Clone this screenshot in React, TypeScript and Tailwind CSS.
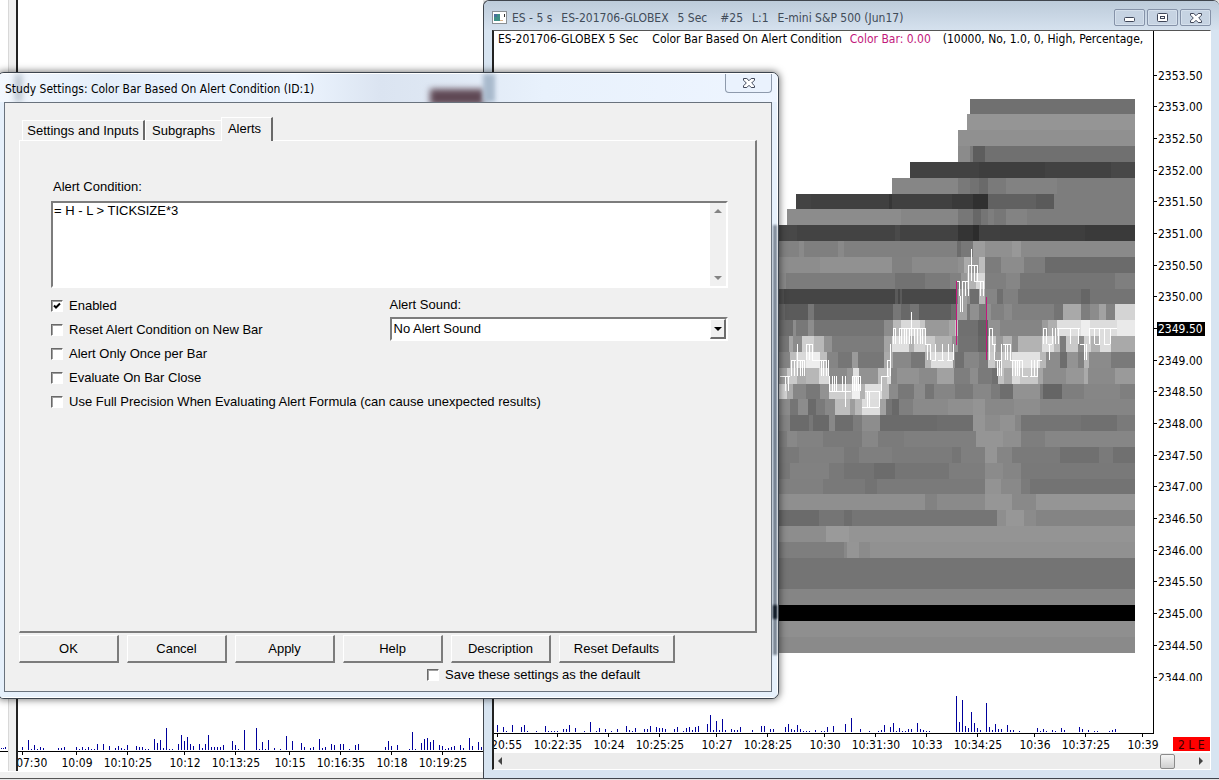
import React, { useState } from "react";

type Cell = [number, string];
type Bar = [number, number];

const ROW_HEIGHT = 554 / 35;
const PLOT_END = 1135;

// one entry per price row, each cell runs until the next one starts
const heatRows: Cell[][] = [
  [[970, "#707070"]],
  [[967, "#959595"]],
  [[958, "#909090"]],
  [[958, "#8b8b8b"], [970, "#7a7a7a"], [973, "#5d5d5d"], [985, "#707070"]],
  [[910, "#424242"], [979, "#3e3e3e"], [1045, "#424242"], [1111, "#484848"]],
  [[892, "#868686"], [958, "#797979"], [970, "#727272"], [979, "#6a6a6a"], [988, "#7a7a7a"], [1006, "#828282"], [1057, "#7d7d7d"]],
  [[796, "#434343"], [811, "#404040"], [889, "#363636"], [892, "#404040"], [952, "#3a3a3a"], [973, "#303030"], [988, "#616161"], [1036, "#5a5a5a"], [1054, "#7d7d7d"]],
  [[787, "#8c8c8c"], [901, "#868686"], [958, "#777777"], [973, "#676767"], [981, "#757575"], [988, "#7e7e7e"], [994, "#777777"], [1006, "#838383"], [1027, "#7d7d7d"]],
  [[779, "#484848"], [797, "#434343"], [895, "#4a4a4a"], [900, "#424242"], [958, "#343434"], [973, "#2c2c2c"], [979, "#404040"], [1000, "#3e3e3e"], [1085, "#3a3a3a"]],
  [[779, "#828282"], [799, "#8a8a8a"], [804, "#7f7f7f"], [838, "#898989"], [844, "#808080"], [957, "#6c6c6c"], [961, "#787878"], [973, "#9d9d9d"], [985, "#909090"], [1012, "#989898"], [1021, "#8a8a8a"]],
  [[779, "#8d8d8d"], [820, "#919191"], [892, "#818181"], [912, "#8a8a8a"], [958, "#909090"], [964, "#ababab"], [970, "#9b9b9b"], [979, "#bdbdbd"], [985, "#7c7c7c"], [1001, "#8c8c8c"], [1024, "#7d7d7d"], [1045, "#6b6b6b"]],
  [[779, "#8a8a8a"], [786, "#7c7c7c"], [895, "#727272"], [925, "#7a7a7a"], [950, "#818181"], [961, "#989898"], [967, "#b4b4b4"], [976, "#d8d8d8"], [985, "#7f7f7f"], [1006, "#868686"], [1020, "#757575"], [1115, "#7f7f7f"]],
  [[779, "#505050"], [784, "#454545"], [895, "#5a5a5a"], [898, "#484848"], [900, "#5a5a5a"], [902, "#484848"], [956, "#7a7a7a"], [958, "#a3a3a3"], [967, "#929292"], [970, "#6e6e6e"], [979, "#b8b8b8"], [985, "#858585"], [997, "#6f6f6f"], [1003, "#808080"], [1018, "#717171"], [1081, "#666666"], [1090, "#747474"]],
  [[779, "#666666"], [785, "#5b5b5b"], [808, "#777777"], [814, "#5e5e5e"], [893, "#777777"], [901, "#686868"], [910, "#747474"], [919, "#5f5f5f"], [951, "#6d6d6d"], [957, "#a2a2a2"], [967, "#787878"], [970, "#909090"], [979, "#7a7a7a"], [986, "#909090"], [991, "#818181"], [1004, "#8a8a8a"], [1012, "#808080"], [1054, "#747474"], [1063, "#a9a9a9"], [1081, "#7e7e7e"], [1090, "#8c8c8c"], [1099, "#a2a2a2"], [1106, "#828282"], [1115, "#d4d4d4"]],
  [[779, "#6e6e6e"], [793, "#8c8c8c"], [796, "#787878"], [808, "#8d8d8d"], [814, "#747474"], [884, "#8c8c8c"], [893, "#b9b9b9"], [901, "#d9d9d9"], [920, "#c6c6c6"], [925, "#999999"], [949, "#a6a6a6"], [955, "#c6c6c6"], [958, "#707070"], [978, "#626262"], [988, "#929292"], [1000, "#858585"], [1042, "#9c9c9c"], [1048, "#afafaf"], [1057, "#dfdfdf"], [1081, "#eeeeee"], [1090, "#dddddd"], [1117, "#eaeaea"]],
  [[779, "#777777"], [789, "#a5a5a5"], [793, "#8c8c8c"], [802, "#cfcfcf"], [814, "#b8b8b8"], [824, "#929292"], [832, "#7c7c7c"], [884, "#a4a4a4"], [892, "#dfdfdf"], [909, "#b2b2b2"], [914, "#d5d5d5"], [925, "#c9c9c9"], [935, "#b1b1b1"], [952, "#949494"], [958, "#727272"], [978, "#666666"], [988, "#c6c6c6"], [996, "#9a9a9a"], [1003, "#b2b2b2"], [1012, "#8c8c8c"], [1018, "#b3b3b3"], [1042, "#dedede"], [1054, "#bbbbbb"], [1060, "#7c7c7c"], [1066, "#c9c9c9"], [1078, "#8d8d8d"], [1084, "#d2d2d2"], [1091, "#b1b1b1"], [1100, "#dddddd"], [1111, "#a9a9a9"]],
  [[779, "#858585"], [790, "#bdbdbd"], [796, "#d9d9d9"], [806, "#eeeeee"], [820, "#bebebe"], [827, "#858585"], [838, "#767676"], [852, "#9a9a9a"], [858, "#777777"], [884, "#aaaaaa"], [893, "#888888"], [911, "#777777"], [925, "#b5b5b5"], [931, "#dddddd"], [953, "#939393"], [955, "#707070"], [964, "#868686"], [979, "#7b7b7b"], [988, "#cbcbcb"], [995, "#a7a7a7"], [1002, "#c8c8c8"], [1012, "#e2e2e2"], [1040, "#b8b8b8"], [1046, "#8c8c8c"], [1060, "#6d6d6d"], [1067, "#939393"], [1078, "#808080"], [1084, "#b6b6b6"], [1089, "#8b8b8b"], [1111, "#7a7a7a"]],
  [[779, "#a3a3a3"], [787, "#cacaca"], [797, "#adadad"], [806, "#b7b7b7"], [819, "#d9d9d9"], [829, "#8b8b8b"], [847, "#999999"], [853, "#e1e1e1"], [859, "#929292"], [878, "#bcbcbc"], [887, "#dddddd"], [891, "#868686"], [897, "#929292"], [919, "#8a8a8a"], [937, "#a1a1a1"], [954, "#7e7e7e"], [970, "#8d8d8d"], [978, "#7a7a7a"], [992, "#707070"], [998, "#c2c2c2"], [1004, "#a9a9a9"], [1012, "#dadada"], [1020, "#c8c8c8"], [1038, "#a5a5a5"], [1043, "#8c8c8c"], [1066, "#979797"], [1084, "#aaaaaa"], [1088, "#8a8a8a"], [1115, "#9a9a9a"]],
  [[779, "#d5d5d5"], [787, "#ababab"], [793, "#868686"], [806, "#787878"], [820, "#929292"], [829, "#cecece"], [852, "#f0f0f0"], [860, "#b2b2b2"], [865, "#dfdfdf"], [882, "#bcbcbc"], [889, "#8b8b8b"], [898, "#787878"], [914, "#8c8c8c"], [925, "#757575"], [934, "#858585"], [955, "#797979"], [973, "#878787"], [991, "#7b7b7b"], [1000, "#6e6e6e"], [1013, "#929292"], [1040, "#7b7b7b"], [1043, "#656565"], [1062, "#7e7e7e"], [1084, "#868686"], [1120, "#7f7f7f"]],
  [[779, "#8c8c8c"], [790, "#757575"], [798, "#8c8c8c"], [808, "#6a6a6a"], [816, "#7a7a7a"], [825, "#888888"], [835, "#bdbdbd"], [850, "#9d9d9d"], [855, "#b9b9b9"], [862, "#dddddd"], [880, "#a2a2a2"], [886, "#757575"], [892, "#696969"], [899, "#7f7f7f"], [913, "#8a8a8a"], [948, "#8f8f8f"], [973, "#949494"], [985, "#888888"], [1014, "#8d8d8d"], [1040, "#858585"]],
  [[779, "#858585"], [790, "#6b6b6b"], [809, "#777777"], [813, "#696969"], [829, "#888888"], [835, "#6d6d6d"], [853, "#7c7c7c"], [862, "#8d8d8d"], [880, "#6b6b6b"], [937, "#6e6e6e"], [973, "#959595"], [985, "#8c8c8c"], [1000, "#929292"], [1015, "#868686"], [1021, "#747474"], [1081, "#707070"], [1117, "#7a7a7a"]],
  [[779, "#7d7d7d"], [787, "#888888"], [797, "#828282"], [823, "#7a7a7a"], [862, "#878787"], [878, "#7b7b7b"], [904, "#7f7f7f"], [976, "#959595"], [1003, "#8f8f8f"], [1021, "#7e7e7e"], [1045, "#868686"]],
  [[779, "#797979"], [799, "#808080"], [844, "#787878"], [859, "#7f7f7f"], [892, "#7b7b7b"], [952, "#757575"], [961, "#7f7f7f"], [985, "#959595"], [997, "#858585"], [1012, "#7a7a7a"], [1060, "#707070"], [1099, "#7a7a7a"], [1113, "#707070"]],
  [[779, "#787878"], [790, "#818181"], [829, "#797979"], [844, "#737373"], [874, "#6c6c6c"], [895, "#757575"], [949, "#7d7d7d"], [985, "#8b8b8b"], [1003, "#858585"], [1021, "#797979"]],
  [[779, "#808080"], [823, "#797979"], [865, "#737373"], [877, "#7a7a7a"], [985, "#939393"], [1001, "#898989"], [1021, "#7b7b7b"], [1030, "#737373"]],
  [[779, "#8f8f8f"], [925, "#828282"], [937, "#8a8a8a"], [985, "#969696"], [1012, "#898989"], [1036, "#959595"]],
  [[779, "#6b6b6b"], [819, "#757575"], [844, "#6d6d6d"], [852, "#757575"], [997, "#8e8e8e"], [1006, "#979797"], [1024, "#8b8b8b"], [1036, "#848484"]],
  [[779, "#8d8d8d"], [826, "#9a9a9a"], [849, "#949494"]],
  [[779, "#7e7e7e"], [844, "#888888"], [847, "#959595"], [859, "#8b8b8b"], [870, "#919191"]],
  [[779, "#747474"]],
  [[779, "#747474"]],
  [[779, "#858585"]],
  [[779, "#000000"]],
  [[779, "#8f8f8f"]],
  [[779, "#8a8a8a"]],
];

// price bars: x, high level, low level (a level is one tick)
const priceBars: [number, number, number][] = [
  [785, 8, 9], [788, 8, 9], [791, 7, 8], [794, 7, 8], [797, 6, 8], [800, 7, 8], [802, 7, 8], [804, 7, 8],
  [806, 6, 7], [809, 6, 7], [812, 6, 7], [821, 7, 8], [823, 7, 8], [826, 7, 8], [828, 7, 8], [829, 8, 9],
  [832, 8, 9], [834, 8, 9], [836, 8, 9], [842, 8, 9], [845, 8, 10], [852, 8, 9], [854, 8, 9], [856, 8, 9],
  [858, 8, 9], [860, 8, 9], [867, 9, 10], [869, 9, 10], [879, 9, 10], [881, 8, 9], [887, 7, 8], [890, 6, 8],
  [893, 5, 6], [895, 5, 6], [899, 5, 6], [901, 5, 6], [904, 5, 6], [906, 5, 6], [909, 5, 6], [911, 4, 6],
  [914, 5, 6], [917, 5, 6], [920, 5, 6], [922, 5, 6], [925, 5, 6], [927, 6, 7], [930, 6, 7], [935, 6, 7],
  [942, 6, 7], [948, 6, 7], [953, 6, 7], [959, 2, 3], [960, 3, 4], [962, 2, 4], [965, 2, 3], [968, 1, 3],
  [971, 0, 2], [974, 1, 2], [977, 1, 2], [980, 2, 3], [983, 2, 3], [989, 5, 7], [992, 5, 6], [994, 6, 7],
  [997, 7, 8], [999, 7, 8], [1001, 6, 8], [1005, 6, 7], [1007, 6, 7], [1010, 6, 7], [1012, 7, 8], [1015, 7, 8],
  [1017, 7, 8], [1019, 7, 8], [1022, 7, 8], [1031, 7, 8], [1034, 7, 8], [1037, 7, 8], [1043, 5, 6], [1046, 5, 6],
  [1049, 6, 7], [1052, 5, 6], [1055, 5, 6], [1058, 5, 6], [1070, 5, 6], [1078, 5, 6], [1084, 6, 7], [1086, 6, 7],
  [1089, 5, 6], [1094, 5, 6], [1099, 5, 6], [1104, 5, 6], [1110, 5, 6],
];

const priceSteps: [number, number, number][] = [
  [780, 790, 8], [791, 796, 7], [798, 805, 7], [806, 812, 6], [812, 826, 7], [829, 851, 9], [852, 860, 8],
  [862, 879, 10], [865, 879, 9], [881, 889, 8], [887, 890, 7], [893, 896, 5], [900, 925, 5], [925, 930, 6],
  [932, 936, 7], [938, 944, 7], [947, 952, 7], [957, 960, 2], [962, 968, 2], [968, 974, 1], [974, 978, 1],
  [974, 984, 2], [989, 993, 5], [992, 996, 6], [995, 1001, 7], [1003, 1010, 6], [1010, 1022, 7], [1022, 1028, 8],
  [1030, 1038, 8], [1038, 1042, 7], [1043, 1047, 5], [1048, 1052, 6], [1057, 1080, 5], [1080, 1085, 6], [1089, 1117, 5],
  [1095, 1100, 6], [1104, 1110, 6],
];

const rightVolume: Bar[] = [
  [497, 7], [503, 5], [506, 1], [512, 7], [521, 5], [524, 7], [527, 1], [536, 1], [545, 6], [548, 1], [551, 1],
  [554, 1], [557, 1], [563, 3], [566, 3], [569, 7], [575, 4], [584, 1], [590, 10], [596, 1], [599, 4], [605, 3],
  [611, 1], [617, 3], [626, 6], [629, 2], [632, 1], [635, 4], [644, 3], [647, 3], [650, 6], [656, 5], [659, 4],
  [662, 4], [665, 3], [674, 3], [677, 5], [683, 1], [686, 4], [689, 5], [692, 2], [695, 5], [698, 6], [707, 8],
  [710, 17], [713, 2], [716, 11], [719, 2], [722, 13], [725, 2], [731, 3], [734, 2], [737, 2], [740, 5], [752, 2],
  [761, 6], [764, 6], [770, 3], [773, 3], [785, 5], [788, 8], [791, 3], [794, 2], [797, 7], [800, 3], [803, 1],
  [806, 1], [809, 1], [815, 2], [821, 1], [824, 1], [827, 5], [833, 6], [845, 8], [851, 14], [860, 3], [869, 1],
  [878, 1], [881, 2], [884, 7], [890, 5], [893, 9], [896, 1], [899, 4], [902, 1], [905, 1], [908, 3], [911, 3],
  [917, 9], [920, 3], [923, 2], [926, 1], [929, 1], [956, 36], [959, 10], [962, 32], [965, 6], [968, 4], [971, 20],
  [974, 9], [977, 4], [980, 2], [986, 29], [989, 5], [992, 2], [995, 8], [998, 3], [1001, 3], [1007, 7], [1010, 2],
  [1013, 2], [1019, 1], [1037, 4], [1040, 1], [1043, 3], [1046, 1], [1052, 2], [1055, 1], [1061, 4], [1064, 2],
  [1079, 5], [1082, 3], [1088, 2], [1094, 1], [1097, 1], [1109, 1], [1112, 2], [1115, 3],
];

const leftVolume: Bar[] = [
  [22, 3], [28, 10], [31, 1], [34, 5], [37, 1], [40, 3], [43, 2], [58, 2], [61, 2], [64, 3], [76, 3], [79, 1],
  [82, 3], [85, 1], [88, 3], [91, 1], [94, 1], [97, 6], [103, 6], [109, 4], [115, 2], [118, 4], [121, 2], [124, 1],
  [127, 5], [136, 4], [139, 3], [142, 3], [145, 1], [148, 1], [154, 11], [157, 7], [160, 10], [163, 2], [166, 22],
  [169, 1], [172, 1], [178, 6], [181, 15], [184, 9], [187, 13], [190, 6], [193, 4], [199, 6], [202, 2], [205, 6],
  [208, 15], [211, 3], [214, 3], [217, 3], [220, 3], [223, 5], [232, 9], [235, 5], [238, 1], [244, 20], [256, 22],
  [259, 1], [262, 8], [265, 1], [268, 10], [274, 2], [280, 1], [286, 14], [292, 9], [301, 7], [304, 3], [310, 2],
  [313, 3], [319, 11], [322, 2], [325, 3], [331, 6], [334, 5], [340, 6], [343, 6], [349, 1], [355, 5], [358, 6],
  [385, 3], [388, 9], [391, 4], [397, 5], [409, 1], [412, 18], [415, 1], [421, 7], [424, 11], [427, 12], [430, 8],
  [433, 10], [439, 5], [442, 4], [445, 1], [448, 2], [451, 3], [454, 4], [460, 5], [463, 2], [469, 12], [472, 4],
  [478, 8], [481, 3],
];

const rightTimes: [number, string][] = [
  [497, "10:20:55"], [557, "10:22:35"], [608, "10:24"], [659, "10:25:25"], [716, "10:27"], [767, "10:28:25"],
  [824, "10:30"], [875, "10:31:30"], [926, "10:33"], [977, "10:34:25"], [1034, "10:36"], [1085, "10:37:25"],
  [1142, "10:39"],
];

const leftTimes: [number, string][] = [
  [22, "10:07:30"], [76, "10:09"], [127, "10:10:25"], [184, "10:12"], [235, "10:13:25"], [289, "10:15"],
  [340, "10:16:35"], [391, "10:18"], [442, "10:19:25"],
];

const levelY = (level: number) => Math.round(249 + level * ROW_HEIGHT);

const Volume = ({ bars, base }: { bars: Bar[]; base: number }) => (
  <g fill="#00009c">
    {bars.map(([x, h]) => (
      <rect key={x} x={x} y={base - h} width={1} height={h} />
    ))}
  </g>
);

const TimeAxis = ({
  times,
  y,
  from,
  to,
}: {
  times: [number, string][];
  y: number;
  from: number;
  to: number;
}) => (
  <g>
    <rect x={from} y={y} width={to - from} height={1} />
    {times.map(([x, label]) => (
      <g key={label}>
        <rect x={x} y={y} width={1} height={4} />
        <text x={x + 1} y={y + 16} textAnchor="middle">
          {label}
        </text>
      </g>
    ))}
  </g>
);

const HeatMap = () => (
  <g shapeRendering="crispEdges">
    {heatRows.map((row, i) => {
      const top = Math.floor(99.15 + i * ROW_HEIGHT);
      const bottom = Math.floor(99.15 + (i + 1) * ROW_HEIGHT);
      return row.map(([x, fill], j) => {
        const end = row[j + 1] ? row[j + 1][0] : PLOT_END;
        return (
          <rect key={`${i}-${x}`} x={x} y={top} width={end - x} height={bottom - top} fill={fill} />
        );
      });
    })}
    {priceBars.map(([x, high, low]) => (
      <rect key={`b${x}`} x={x} y={levelY(high)} width={1} height={levelY(low) - levelY(high)} fill="#fff" />
    ))}
    {priceSteps.map(([x1, x2, level], i) => (
      <rect key={`s${i}`} x={x1} y={levelY(level)} width={x2 - x1} height={1} fill="#fff" />
    ))}
    <rect x={956} y={281} width={1} height={64} fill="#c2187c" />
    <rect x={986} y={297} width={1} height={63} fill="#c2187c" />
  </g>
);

const PriceAxis = () => (
  <g>
    <rect x={1153} y={47} width={1} height={687} />
    {Array.from({ length: 20 }, (_, i) => {
      const y = Math.floor(75 + (i * 602) / 19);
      const current = i === 8;
      return (
        <g key={i}>
          <rect x={1153} y={y} width={4} height={1} />
          {current && <rect x={1157} y={y - 6} width={48} height={14} />}
          <text x={1158} y={y + 5} fill={current ? "#fff" : "#000"}>
            {(2353.5 - i * 0.5).toFixed(2)}
          </text>
        </g>
      );
    })}
  </g>
);

const LeftChart = () => (
  <section className="absolute inset-y-0 left-0 flex w-[483px] flex-col bg-[#f0f0f0]">
    <div className="flex flex-1 items-stretch">
      <div className="flex w-[9px] flex-col justify-end border-r border-[#d8d8d8] bg-white">
        <svg className="h-[30px] w-full" viewBox="0 741 8 30" preserveAspectRatio="xMinYMax slice">
          <rect x={1} y={748} width={1} height={1} fill="#00009c" />
          <rect x={3} y={748} width={1} height={1} fill="#00009c" />
          <rect x={5} y={747} width={1} height={2} fill="#00009c" />
          <rect x={0} y={751} width={8} height={1} />
        </svg>
      </div>
      <div className="ml-[7px] flex flex-1 items-end overflow-hidden border-l-2 border-[#222] bg-white">
        <svg
          width={465}
          height={81}
          viewBox="18 690 465 81"
          className="shrink-0 font-[DejaVu_Sans_Condensed,sans-serif] text-[12px]"
        >
          <Volume bars={leftVolume} base={750} />
          <TimeAxis times={leftTimes} y={751} from={18} to={483} />
        </svg>
      </div>
    </div>
    <div className="h-[7px] border-t border-white" />
    <div className="h-[2px] border-t border-[#555] bg-[#e4e4e4]" />
  </section>
);

const CaptionButton = ({ label, children }: { label: string; children: React.ReactNode }) => (
  <button
    aria-label={label}
    className="flex h-[17px] w-[31px] items-center justify-center rounded-[2px] border border-[#8592a8] bg-[#c6d3e2] shadow-[inset_0_0_0_1px_#d5e0ec]"
  >
    {children}
  </button>
);

const CloseGlyph = () => (
  <svg width={12} height={10} viewBox="0 0 12 10">
    <path
      d="M.5.5h3.3L6 2.7 8.2.5h3.3v1.700L8.700 5l2.800 2.800v1.700H8.200L6 7.300 3.800 9.500H.5V7.800L3.300 5 .5 2.200z"
      fill="#fff"
      stroke="#3f4658"
      strokeLinejoin="round"
    />
  </svg>
);

const RightChart = () => (
  <section className="absolute inset-y-0 right-0 left-[483px] flex flex-col bg-[#e4e4e4] pb-px">
    <div className="flex flex-1 flex-col rounded-t-md border border-[#3f454d] border-r-0 bg-[#d7e4f1] pr-2 pb-2 pl-2">
      <header className="-mx-2 flex h-[29px] items-center rounded-t-md bg-linear-to-b from-[#bccbda] to-[#d5e1ee] pt-1 pr-2 pl-2">
        <svg width={15} height={13} viewBox="0 0 15 13">
          <rect x={0.5} y={0.5} width={14} height={12} fill="#fff" stroke="#8a8f94" />
          <rect x={2} y={3} width={6} height={7} fill="#3f8f86" />
          <rect x={2} y={3} width={3} height={3} fill="#4a6f9c" />
          <rect x={8} y={9} width={3} height={1} fill="#d9b48a" />
          <rect x={12} y={3} width={1} height={3} fill="#333" />
        </svg>
        <h1 className="ml-[5px] flex flex-1 gap-[9px] pt-px font-[DejaVu_Sans_Condensed,sans-serif] text-[12px] whitespace-nowrap text-[#414b58]">
          <span>ES - 5 s</span>
          <span>ES-201706-GLOBEX</span>
          <span>5 Sec</span>
          <span className="ml-1">#25</span>
          <span>L:1</span>
          <span>E-mini S&amp;P 500 (Jun17)</span>
        </h1>
        <div className="flex gap-[2px]">
          <CaptionButton label="Minimize">
            <svg width={11} height={5} viewBox="0 0 11 5" className="mt-1">
              <rect x={0.5} y={0.5} width={10} height={4} rx={1} fill="#fff" stroke="#3f4658" />
            </svg>
          </CaptionButton>
          <CaptionButton label="Restore">
            <svg width={11} height={9} viewBox="0 0 11 9">
              <rect x={0.5} y={0.5} width={10} height={8} rx={1} fill="#fff" stroke="#3f4658" />
              <rect x={3.5} y={3.5} width={4} height={2} fill="#fff" stroke="#3f4658" />
            </svg>
          </CaptionButton>
          <CaptionButton label="Close">
            <CloseGlyph />
          </CaptionButton>
        </div>
      </header>
      <div className="flex flex-1 flex-col overflow-hidden border-t border-r border-b border-l-2 border-t-[#555] border-r-white border-b-white border-l-[#222] bg-white">
        <p className="mr-[56px] flex h-4 gap-3 overflow-hidden border-r border-black pl-1 font-[DejaVu_Sans_Condensed,sans-serif] text-[12px] leading-4 whitespace-nowrap">
          <span>ES-201706-GLOBEX 5 Sec</span>
          <span className="ml-[2px]">
            Color Bar Based On Alert Condition<span className="ml-2 text-[#c2187c]">Color Bar: 0.00</span>
          </span>
          <span>(10000, No, 1.0, 0, High, Percentage,</span>
        </p>
        <div className="flex flex-1 items-start justify-end overflow-hidden">
          <svg
            width={717}
            height={706}
            viewBox="493 47 717 706"
            className="shrink-0 font-[DejaVu_Sans_Condensed,sans-serif] text-[12px]"
          >
            <HeatMap />
            <Volume bars={rightVolume} base={732} />
            <PriceAxis />
            <TimeAxis times={rightTimes} y={733} from={493} to={1154} />
            <rect x={1156} y={681} width={54} height={6} fill="#fff" />
            <rect x={1173} y={737} width={37} height={14} fill="#f00" />
            <text x={1178} y={749} fill="#3a0000">
              2 L E
            </text>
          </svg>
        </div>
        <div className="flex h-4 items-center justify-between bg-[#ececec] pr-[6px] pl-1">
          <button aria-label="Scroll left" className="flex">
            <svg width={5} height={8} viewBox="0 0 5 8">
              <path d="M4 0v8L0 4z" fill="#444" />
            </svg>
          </button>
          <div className="flex flex-1 justify-end">
            <button
              aria-label="Scroll position"
              className="h-[15px] w-[15px] rounded-[2px] border border-[#8a8a8a] bg-linear-to-b from-[#f5f5f5] to-[#cfcfcf]"
            />
          </div>
          <button aria-label="Scroll right" className="ml-6 flex">
            <svg width={5} height={8} viewBox="0 0 5 8">
              <path d="M0 0v8l4-4z" fill="#444" />
            </svg>
          </button>
        </div>
      </div>
    </div>
  </section>
);

const CheckRow = ({ label, initial = false }: { label: string; initial?: boolean }) => {
  const [checked, setChecked] = useState(initial);
  return (
    <label className="flex h-6 items-center gap-[6px] whitespace-nowrap">
      <span className="grid h-3 w-3 items-center justify-items-center">
        <input
          type="checkbox"
          checked={checked}
          onChange={(e) => setChecked(e.target.checked)}
          className="col-start-1 row-start-1 h-3 w-3 appearance-none border border-t-[#696969] border-r-white border-b-white border-l-[#696969] bg-white shadow-[inset_1px_1px_0_#a0a0a0]"
        />
        {checked && (
          <svg width={8} height={8} viewBox="0 0 8 8" className="pointer-events-none col-start-1 row-start-1">
            <path d="M1 3.5l2 2 4-4" fill="none" stroke="#000" strokeWidth={2} />
          </svg>
        )}
      </span>
      {label}
    </label>
  );
};

const PushButton = ({ children, wide }: { children: React.ReactNode; wide?: boolean }) => (
  <button
    className={`${wide ? "w-[116px]" : "w-[100px]"} h-7 border-t border-r-2 border-b-2 border-l border-t-white border-r-[#7c7c7c] border-b-[#7c7c7c] border-l-white bg-[#f0f0f0]`}
  >
    {children}
  </button>
);

const tabClass = "h-5 border-t border-l border-white";

const StudySettings = () => (
  <section
    role="dialog"
    aria-label="Study Settings"
    className="absolute top-[72px] -left-[3px] flex h-[627px] w-[782px] flex-col overflow-hidden rounded-[7px] border border-[#3c444e] bg-[#e6f0fb] px-[6px] pb-[6px] shadow-[0_0_7px_1px_rgba(0,0,0,0.5)]"
  >
    <div className="absolute inset-0 shadow-[inset_0_0_0_1px_#ffffff]" />
    <div className="absolute top-[152px] right-[1px] h-[430px] w-1 bg-linear-to-b from-[#7f8a98] via-[#6d7a8a] to-[#77828f] blur-[1px]" />
    <div className="absolute top-[532px] right-[1px] h-[14px] w-1 bg-[#0c1622] blur-[1px]" />
    <header className="relative -mx-[5px] mt-px flex h-[28px] items-start justify-between bg-[linear-gradient(90deg,#f3f8fe_0%,#e4eefa_14%,#edf5ff_38%,#dbe4f1_49%,#dfe8f4_58%,#e8f1fc_70%,#eef5ff_100%)] pr-[5px] pl-[6px]">
      <div className="absolute top-[15px] right-[293px] h-4 w-[54px] bg-[#5f4854] blur-[3px]" />
      <div className="absolute top-0 right-[282px] h-[28px] w-3 bg-[#a9bacd] blur-[2px]" />
      <div className="absolute top-0 left-4 h-[28px] w-[7px] bg-[#b7c1cd] blur-[3px]" />
      <h2 className="relative mt-[7px] font-[DejaVu_Sans_Condensed,sans-serif] text-[12px] leading-4">
        Study Settings: Color Bar Based On Alert Condition (ID:1)
      </h2>
      <button
        aria-label="Close"
        className="relative flex h-[19px] w-[47px] items-center justify-center rounded-b border border-t-0 border-[#8e9aac] bg-[#eaf2fd]"
      >
        <CloseGlyph />
      </button>
    </header>
    <div className="relative flex flex-1 flex-col border border-[#69727d] bg-[#f0f0f0] pr-[14px] pl-[14px] font-['Liberation_Sans',Arial,sans-serif] text-[13px] leading-4">
      <div role="tablist" className="mt-[13px] flex h-6 items-end pl-[3px]">
        <button role="tab" className={`${tabClass} w-[123px] border-r-2 border-r-[#696969]`}>
          Settings and Inputs
        </button>
        <button role="tab" className={`${tabClass} w-[76px]`}>
          Subgraphs
        </button>
        <button
          role="tab"
          aria-selected
          className="relative -mb-px h-6 w-[52px] border-t border-r-2 border-l border-t-white border-r-[#696969] border-l-white bg-[#f0f0f0] pr-1 pb-[2px]"
        >
          Alerts
        </button>
      </div>
      <div className="flex flex-1 flex-col border-t border-r-2 border-b-2 border-l border-t-white border-r-[#7c7c7c] border-b-[#7c7c7c] border-l-white pr-[27px] pl-[31px]">
        <label htmlFor="condition" className="mt-[38px] pl-[2px]">
          Alert Condition:
        </label>
        <div className="mt-[6px] flex h-[87px] border-2 border-t-[#7c7c7c] border-r-white border-b-white border-l-[#7c7c7c] bg-white">
          <textarea
            id="condition"
            defaultValue="= H - L > TICKSIZE*3"
            className="flex-1 resize-none pl-px outline-none"
          />
          <div className="flex w-4 flex-col items-center justify-between bg-[#f0f0f0] py-[6px]">
            <svg width={8} height={4} viewBox="0 0 8 4">
              <path d="M0 4h8L4 0z" fill="#848484" />
            </svg>
            <svg width={8} height={4} viewBox="0 0 8 4">
              <path d="M0 0h8L4 4z" fill="#848484" />
            </svg>
          </div>
        </div>
        <div className="mt-[6px] flex">
          <div className="w-1/2">
            <CheckRow label="Enabled" initial />
            <CheckRow label="Reset Alert Condition on New Bar" />
            <CheckRow label="Alert Only Once per Bar" />
            <CheckRow label="Evaluate On Bar Close" />
            <CheckRow label="Use Full Precision When Evaluating Alert Formula (can cause unexpected results)" />
          </div>
          <div className="flex w-1/2 flex-col pt-[3px]">
            <label htmlFor="sound">Alert Sound:</label>
            <div className="mt-1 grid h-6 items-center justify-items-end border-2 border-t-[#7c7c7c] border-r-white border-b-white border-l-[#7c7c7c] bg-white">
              <select id="sound" className="col-start-1 row-start-1 h-full w-full appearance-none pl-[2px] outline-none">
                <option>No Alert Sound</option>
              </select>
              <span className="pointer-events-none col-start-1 row-start-1 flex h-5 w-4 items-center justify-center border-t border-r-2 border-b-2 border-l border-t-white border-r-[#6d6d6d] border-b-[#6d6d6d] border-l-white bg-[#f0f0f0]">
                <svg width={8} height={4} viewBox="0 0 8 4">
                  <path d="M0 0h8L4 4z" />
                </svg>
              </span>
            </div>
          </div>
        </div>
      </div>
      <div className="mt-[2px] flex gap-2">
        <PushButton>OK</PushButton>
        <PushButton>Cancel</PushButton>
        <PushButton>Apply</PushButton>
        <PushButton>Help</PushButton>
        <PushButton>Description</PushButton>
        <PushButton wide>Reset Defaults</PushButton>
      </div>
      <div className="mb-1 pl-[408px]">
        <CheckRow label="Save these settings as the default" />
      </div>
    </div>
  </section>
);

const App = () => {
  return (
    <main className="relative h-screen overflow-hidden bg-white text-black">
      <LeftChart />
      <RightChart />
      <StudySettings />
    </main>
  );
};

export default App;
